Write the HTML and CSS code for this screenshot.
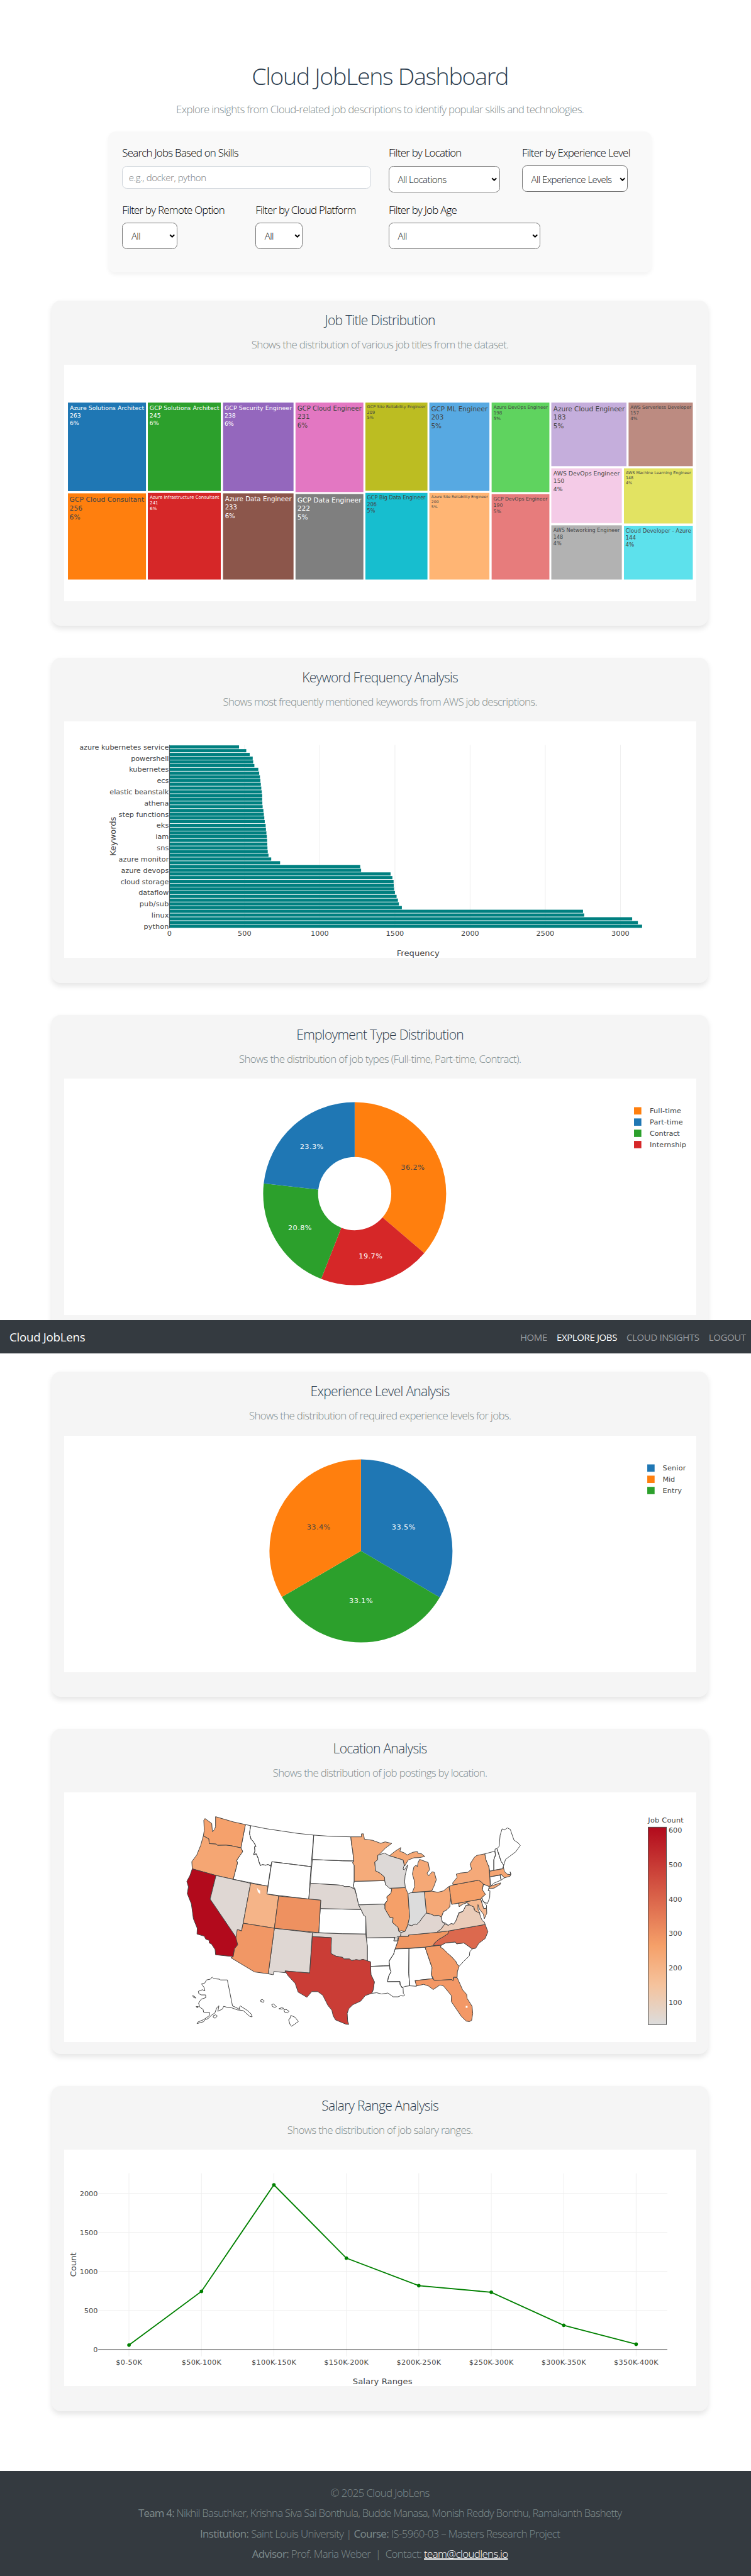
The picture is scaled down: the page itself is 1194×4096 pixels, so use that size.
FILE: index.html
```html
<!DOCTYPE html>
<html lang="en">
<head>
<meta charset="utf-8">
<title>Cloud JobLens Dashboard</title>
<link rel="stylesheet" href="styles.css">
</head>
<body>
<nav class="navbar">
  <a class="brand">Cloud JobLens</a>
  <div class="nav-links"><a>HOME</a><a class="active">EXPLORE JOBS</a><a>CLOUD INSIGHTS</a><a>LOGOUT</a></div>
</nav>
<main class="page">
  <h1>Cloud JobLens Dashboard</h1>
  <p class="lead">Explore insights from Cloud-related job descriptions to identify popular skills and technologies.</p>

  <section class="filters">
    <div class="field wide"><label>Search Jobs Based on Skills</label><div class="input">e.g., docker, python</div></div>
    <div class="field"><label>Filter by Location</label><div class="select w-location"><span>All Locations</span><svg class="chev" viewBox="0 0 12 8"><path d="M1.5 1.5 6 6 10.5 1.5"/></svg></div></div>
    <div class="field"><label>Filter by Experience Level</label><div class="select w-level"><span>All Experience Levels</span><svg class="chev" viewBox="0 0 12 8"><path d="M1.5 1.5 6 6 10.5 1.5"/></svg></div></div>
    <div class="field"><label>Filter by Remote Option</label><div class="select w-remote"><span>All</span><svg class="chev" viewBox="0 0 12 8"><path d="M1.5 1.5 6 6 10.5 1.5"/></svg></div></div>
    <div class="field"><label>Filter by Cloud Platform</label><div class="select w-cloud"><span>All</span><svg class="chev" viewBox="0 0 12 8"><path d="M1.5 1.5 6 6 10.5 1.5"/></svg></div></div>
    <div class="field wide"><label>Filter by Job Age</label><div class="select w-age"><span>All</span><svg class="chev" viewBox="0 0 12 8"><path d="M1.5 1.5 6 6 10.5 1.5"/></svg></div></div>
  </section>

  <section class="card">
    <h2>Job Title Distribution</h2>
    <p>Shows the distribution of various job titles from the dataset.</p>
    <svg class="plot" id="treemap" viewBox="135 771 1337 500"></svg>
  </section>

  <section class="card">
    <h2>Keyword Frequency Analysis</h2>
    <p>Shows most frequently mentioned keywords from AWS job descriptions.</p>
    <svg class="plot" id="keywords" viewBox="135 1526 1337 500">
      <text class="axis-title" x="883.4" y="2022" text-anchor="middle" textLength="90.6">Frequency</text>
      <text class="axis-title" transform="translate(244.5 1769) rotate(-90)" text-anchor="middle" textLength="82.6">Keywords</text>
    </svg>
  </section>

  <section class="card">
    <h2>Employment Type Distribution</h2>
    <p>Shows the distribution of job types (Full-time, Part-time, Contract).</p>
    <svg class="plot" viewBox="135 2281 1337 500">
      <g fill="none" stroke-width="116.1" transform="rotate(-90 749.3 2524.4)">
        <circle cx="749.3" cy="2524.4" r="135.45" pathLength="100" stroke="#ff7f0e" stroke-dasharray="36.2 63.8"/>
        <circle cx="749.3" cy="2524.4" r="135.45" pathLength="100" stroke="#d62728" stroke-dasharray="19.7 80.3" stroke-dashoffset="-36.2"/>
        <circle cx="749.3" cy="2524.4" r="135.45" pathLength="100" stroke="#2ca02c" stroke-dasharray="20.8 79.2" stroke-dashoffset="-55.9"/>
        <circle cx="749.3" cy="2524.4" r="135.45" pathLength="100" stroke="#1f77b4" stroke-dasharray="23.3 76.7" stroke-dashoffset="-76.7"/>
      </g>
      <g class="tick" text-anchor="middle">
        <text x="872" y="2474" textLength="50">36.2%</text>
        <text class="light" x="658.3" y="2430" textLength="50">23.3%</text>
        <text class="light" x="633.4" y="2601" textLength="50">20.8%</text>
        <text class="light" x="782.9" y="2662" textLength="50">19.7%</text>
      </g>
      <g class="tick">
        <rect x="1340" y="2341.5" width="15.5" height="15.5" fill="#ff7f0e"/><text x="1373.3" y="2354.3" textLength="66.5">Full-time</text>
        <rect x="1340" y="2365.3" width="15.5" height="15.5" fill="#1f77b4"/><text x="1373.3" y="2378" textLength="70">Part-time</text>
        <rect x="1340" y="2389" width="15.5" height="15.5" fill="#2ca02c"/><text x="1373.3" y="2401.8" textLength="63.5">Contract</text>
        <rect x="1340" y="2412.8" width="15.5" height="15.5" fill="#d62728"/><text x="1373.3" y="2425.5" textLength="77">Internship</text>
      </g>
    </svg>
  </section>

  <section class="card">
    <h2>Experience Level Analysis</h2>
    <p>Shows the distribution of required experience levels for jobs.</p>
    <svg class="plot" viewBox="135 3036 1337 500">
      <g fill="none" stroke-width="193.5" transform="rotate(-90 762.6 3279.5)">
        <circle cx="762.6" cy="3279.5" r="96.75" pathLength="100" stroke="#1f77b4" stroke-dasharray="33.5 66.5"/>
        <circle cx="762.6" cy="3279.5" r="96.75" pathLength="100" stroke="#2ca02c" stroke-dasharray="33.1 66.9" stroke-dashoffset="-33.5"/>
        <circle cx="762.6" cy="3279.5" r="96.75" pathLength="100" stroke="#ff7f0e" stroke-dasharray="33.4 66.6" stroke-dashoffset="-66.6"/>
      </g>
      <g class="tick" text-anchor="middle">
        <text class="light" x="852.7" y="3234.7" textLength="50">33.5%</text>
        <text x="673" y="3234.7" textLength="50">33.4%</text>
        <text class="light" x="762.6" y="3390.4" textLength="50">33.1%</text>
      </g>
      <g class="tick">
        <rect x="1368" y="3096.5" width="15.5" height="15.5" fill="#1f77b4"/><text x="1400.6" y="3109.3" textLength="49">Senior</text>
        <rect x="1368" y="3120.3" width="15.5" height="15.5" fill="#ff7f0e"/><text x="1400.6" y="3133" textLength="26">Mid</text>
        <rect x="1368" y="3144" width="15.5" height="15.5" fill="#2ca02c"/><text x="1400.6" y="3156.7" textLength="40.5">Entry</text>
      </g>
    </svg>
  </section>

  <section class="card">
    <h2>Location Analysis</h2>
    <p>Shows the distribution of job postings by location.</p>
    <svg class="plot tall" viewBox="135 3791 1337 528">
      <defs><linearGradient id="reds" x1="0" y1="1" x2="0" y2="0"><stop offset="0" stop-color="#dcdcdc"/><stop offset=".2" stop-color="#f5c39d"/><stop offset=".4" stop-color="#f5a069"/><stop offset="1" stop-color="#b20a1c"/></linearGradient></defs>
      <g class="states" transform="translate(370 3800) scale(.47831 .33333)">
        <path class="none" d="M310 177L333 184 328 235 335 270 345 285 357 315 350 318 352 345 346 368 358 363 366 390 368 405 376 437 385 431 400 435 410 430 420 440 424 430 409 568 256 524 275 420 271 405 285 375 298 348 290 325zM333 184L400 203 470 218 540 233 612 244 600 444 427 413 422 440 410 430 400 435 385 431 376 437 368 405 366 390 358 363 346 368 352 345 350 318 357 315 345 285 335 270 328 235zM427 413L600 444 590 650 405 618zM612 244L690 252 776 255 779 300 784 340 789 408 740 407 606 399zM606 399L740 407 789 408 784 420 791 435 791 535 787 570 792 586 770 570 750 571 735 562 597 550zM641 710L822 716 826 735 832 735 832 752 842 762 842 872 740 870 634 863zM791 537L926 533 930 560 945 575 957 583 955 610 935 635 939 650 937 660 927 675 926 690 919 682 810 687 800 620 795 586 787 570zM845 896L970 893 966 915 985 915 972 966 965 1000 948 1035 945 1050 948 1073 920 1073 863 1077 863 1048 849 1045 849 950zM863 1077L948 1073 949 1095 954 1110 943 1140 938 1174 993 1173 995 1195 1007 1215 1008 1248 1014 1260 1008 1265 996 1263 985 1270 963 1270 940 1246 912 1252 890 1244 868 1248 875 1225 880 1175 865 1130zM972 966L1033 964 1032 1120 1036 1200 1015 1204 1002 1213 993 1190 993 1173 938 1174 943 1140 954 1110 949 1095 945 1045 965 1000zM1033 964L1104 955 1135 1085 1132 1130 1138 1155 1060 1167 1066 1188 1066 1203 1036 1200 1032 1120zM1176 942L1195 928 1238 922 1244 934 1276 928 1313 966 1302 985 1300 1010 1275 1045 1255 1076 1245 1062 1240 1045 1222 1017 1205 995 1185 967 1172 955zM1215 640L1222 683 1253 676 1255 698 1270 683 1290 672 1298 685 1285 690 1272 728 1254 735 1240 790 1230 810 1220 805 1207 817 1192 800 1180 795 1176 765 1185 730 1200 718 1213 700zM1350 650L1356 645 1360 660 1376 690 1376 708 1363 710zM1362 555L1388 570 1383 597 1391 597 1390 640 1380 678 1360 665 1355 640 1371 620 1357 595zM1368 363L1413 346 1415 370 1408 400 1408 467 1390 473 1386 440 1381 430 1373 400zM1413 346L1414 332 1422 330 1440 410 1452 435 1447 457 1408 467 1408 400 1416 372zM1422 330L1432 315 1436 245 1445 204 1455 212 1468 198 1481 208 1497 275 1515 293 1525 310 1505 350 1460 398 1452 435 1440 410zM1390 509L1436 498 1440 530 1410 548 1395 565zM1436 498L1442 494 1455 515 1440 530z"/>
        <path fill="#f5a16c" d="M178 127L256 160 310 177 290 325 245 311 224 308 187 309 180 301 150 298 148 268 124 249 128 215 126 150 131 139 161 170 164 222 173 210 178 190z"/>
        <path fill="#f5a673" d="M124 249L148 268 150 298 180 301 187 309 224 308 245 311 290 325 298 348 285 375 271 405 275 420 256 524 180 500 75 458 73 412 95 370 112 310z"/>
        <path fill="#b20a1c" d="M75 458L180 500 154 650 270 895 276 940 262 965 256 1015 178 1003 176 970 160 935 150 928 150 912 135 905 128 885 96 872 97 835 80 775 71 680 53 615 58 572 51 538 65 500z"/>
        <path fill="#dfd7d3" d="M180 500L333 550 300 803 293 852 276 843 270 895 154 650zM438 835L606 863 594 1119 485 1106 487 1117 436 1109 433 1130 411 1124zM597 550L735 562 750 571 770 570 792 586 800 620 810 685 822 716 641 710 643 657 590 650zM606 863L740 870 842 872 849 950 849 1045 830 1032 815 1038 800 1034 780 1040 770 1030 745 1030 740 1020 710 1012 688 995 690 895 606 888z"/>
        <path fill="#f5b488" d="M333 550L409 568 405 618 457 631 438 835 300 803z"/>
        <path fill="#ee9160" d="M457 631L643 657 634 863 438 835z"/>
        <path fill="#f19765" d="M300 803L438 835 411 1124 350 1112 246 1022 256 1015 262 965 276 940 268 895 274 843 293 852z"/>
        <path fill="#ca3d36" d="M606 888L690 895 688 995 710 1012 740 1020 745 1030 770 1030 780 1040 800 1034 815 1038 830 1032 863 1048 865 1130 880 1175 875 1225 868 1248 840 1262 820 1297 785 1320 767 1345 760 1375 762 1425 767 1445 755 1444 708 1416 698 1390 692 1355 675 1325 652 1260 630 1237 603 1237 582 1273 543 1240 530 1185 498 1135 485 1106 594 1119z"/>
        <path fill="#f5ab7a" d="M776 255L823 255 823 236 832 236 836 270 872 277 908 296 928 287 957 297 930 325 902 366 895 372 895 400 882 415 885 470 905 485 925 510 926 533 791 537 791 435 784 420 789 408 784 340 779 300z"/>
        <path fill="#ded9d5" d="M810 687L919 682 927 690 927 712 950 768 963 768 960 798 985 830 988 855 998 862 996 885 980 890 983 915 966 915 972 893 845 896 842 762 832 752 826 730z"/>
        <path fill="#f39b67" d="M1104 955L1176 942 1172 955 1185 967 1205 995 1222 1017 1240 1045 1245 1062 1255 1076 1247 1110 1246 1146 1230 1146 1228 1168 1222 1161 1145 1166 1132 1130 1135 1085z"/>
        <path fill="#f39866" d="M1060 1167L1138 1155 1145 1166 1222 1161 1228 1168 1232 1146 1246 1148 1270 1225 1288 1255 1290 1280 1312 1330 1315 1375 1310 1420 1300 1427 1286 1424 1265 1395 1220 1300 1221 1263 1185 1200 1170 1195 1140 1224 1120 1202 1098 1191 1066 1201z"/>
        <path fill="#dc694e" d="M1208 852L1370 811 1382 857 1370 900 1342 930 1328 962 1313 966 1276 928 1244 934 1238 922 1195 928 1176 942 1141 945 1145 930 1165 905 1180 893 1205 870z"/>
        <path fill="#f09662" d="M988 887L1031 886 1031 878 1156 861 1208 852 1205 870 1180 893 1165 905 1145 930 1141 945 1104 955 972 966 985 915z"/>
        <path fill="#e0d5d0" d="M996 885L998 862 1015 855 1026 822 1028 812 1045 818 1060 808 1068 810 1080 793 1095 763 1110 738 1130 745 1145 755 1165 753 1176 765 1180 795 1192 808 1175 840 1156 861 1031 878 1031 886z"/>
        <path fill="#eaccb9" d="M1156 861L1175 840 1192 808 1207 817 1220 805 1230 810 1240 790 1254 740 1272 728 1285 690 1302 688 1320 700 1320 715 1345 740 1350 765 1358 788 1366 795 1370 811 1208 852z"/>
        <path fill="#f5b890" d="M1253 676L1350 650 1363 710 1376 708 1377 740 1366 775 1362 745 1345 715 1338 685 1338 715 1347 740 1325 725 1320 700 1302 688 1290 672 1270 683 1255 698z"/>
        <path fill="#f5a069" d="M1210 570L1228 560 1340 530 1352 540 1362 555 1357 590 1371 620 1355 640 1350 650 1222 683zM947 581L1017 577 1029 617 1036 765 1028 812 1023 830 1015 855 998 850 990 857 985 830 960 798 963 768 950 768 927 712 927 680 937 660 935 635 953 615 957 585z"/>
        <path fill="#f5a979" d="M1228 560L1226 548 1246 512 1242 492 1258 485 1293 480 1310 460 1303 428 1322 385 1333 373 1368 363 1373 400 1386 445 1390 500 1392 560 1390 570 1438 547 1437 556 1410 580 1388 585 1388 570 1362 555 1352 540 1340 530z"/>
        <path fill="#f5a572" d="M1390 473L1447 458 1450 445 1455 475 1468 492 1483 495 1480 477 1484 490 1480 505 1455 515 1442 494 1390 509z"/>
        <path fill="#f5a876" d="M1101 604L1133 599 1160 607 1185 598 1210 570 1218 640 1213 700 1200 718 1185 730 1176 765 1165 753 1145 755 1130 745 1110 738zM947 375L970 348 997 323 993 347 1010 355 1025 370 1050 353 1070 348 1073 360 1088 362 1103 380 1078 387 1055 388 1030 402 1014 440 1007 402 985 392zM1080 398L1118 418 1124 465 1113 485 1120 503 1135 477 1145 480 1154 527 1143 570 1133 599 1048 607 1058 570 1056 530 1048 490 1055 445 1065 435 1070 445 1073 420z"/>
        <path fill="#dcdcdc" d="M1029 617L1040 610 1101 604 1110 738 1095 763 1080 793 1068 810 1060 808 1045 818 1028 812 1036 765z"/>
        <path fill="#ddd9d7" d="M895 372L925 358 947 375 985 392 1007 402 1012 435 1007 460 1012 465 1028 432 1016 500 1014 540 1017 577 947 581 930 560 926 533 925 510 905 485 885 470 882 415 895 400z"/>
        <path class="none" d="M163 1145L170 1155 195 1158 200 1163 230 1163 253 1328 265 1335 285 1350 282 1338 288 1328 320 1358 335 1378 340 1397 330 1395 315 1377 300 1357 275 1353 250 1340 232 1338 214 1330 208 1348 188 1362 193 1327 183 1340 175 1372 160 1387 145 1408 132 1415 125 1428 96 1440 100 1430 125 1415 150 1390 152 1370 125 1367 123 1350 108 1335 103 1310 115 1285 135 1275 134 1258 115 1258 104 1250 102 1235 120 1225 131 1232 127 1210 116 1188 130 1183 138 1163 155 1158zM76 1262L86 1268 91 1278 82 1275zM92 1332L102 1332 98 1341zM168 1390L178 1384 186 1392 176 1406 168 1400zM378 1290L385 1287 393 1296 390 1305 378 1300zM426 1320L434 1315 447 1332 441 1337 431 1333zM458 1346L470 1339 479 1343 472 1348zM480 1352L490 1350 503 1362 495 1372 484 1368zM511 1388L530 1400 544 1427 514 1457 507 1445 501 1415 506 1410z"/>
        <path class="lake" d="M361 577L368 590 375 595 375 617 365 605zM1284 1328h8v12h-8z"/>
      </g>
      <rect x="1370" y="3864.6" width="38.5" height="417.4" fill="url(#reds)" stroke="#444" stroke-width="1.25"/>
      <g class="tick">
        <text x="1369.7" y="3855" textLength="75">Job Count</text>
        <text x="1413" y="3876">600</text><text x="1413" y="3949">500</text><text x="1413" y="4022">400</text>
        <text x="1413" y="4094">300</text><text x="1413" y="4167">200</text><text x="1413" y="4240">100</text>
      </g>
    </svg>
  </section>

  <section class="card">
    <h2>Salary Range Analysis</h2>
    <p>Shows the distribution of job salary ranges.</p>
    <svg class="plot" viewBox="135 4546 1337 500">
      <path class="grid" d="M272.1 4596V4983M425.3 4596V4983M578.5 4596V4983M731.7 4596V4983M884.9 4596V4983M1038.1 4596V4983M1191.3 4596V4983M1344.5 4596V4983M207 4638.6H1410.5M207 4721.1H1410.5M207 4803.6H1410.5M207 4886.2H1410.5"/>
      <path d="M207 4968.7H1410.5" stroke="#444" stroke-width="1.25"/>
      <polyline points="272.1,4959.4 425.3,4845.8 578.5,4620.5 731.7,4775.5 884.9,4833.7 1038.1,4847.7 1191.3,4917.5 1344.5,4957.5" fill="none" stroke="#008000" stroke-width="2.5"/>
      <g fill="#008000"><circle cx="272.1" cy="4959.4" r="3.75"/><circle cx="425.3" cy="4845.8" r="3.75"/><circle cx="578.5" cy="4620.5" r="3.75"/><circle cx="731.7" cy="4775.5" r="3.75"/><circle cx="884.9" cy="4833.7" r="3.75"/><circle cx="1038.1" cy="4847.7" r="3.75"/><circle cx="1191.3" cy="4917.5" r="3.75"/><circle cx="1344.5" cy="4957.5" r="3.75"/></g>
      <g class="tick" text-anchor="end"><text x="206" y="4644">2000</text><text x="206" y="4726.5">1500</text><text x="206" y="4809">1000</text><text x="206" y="4891.5">500</text><text x="206" y="4974">0</text></g>
      <g class="tick" text-anchor="middle"><text x="272.1" y="5000.4" textLength="55.5">$0-50K</text><text x="425.3" y="5000.4" textLength="84">$50K-100K</text><text x="578.5" y="5000.4" textLength="94">$100K-150K</text><text x="731.7" y="5000.4" textLength="94">$150K-200K</text><text x="884.9" y="5000.4" textLength="94">$200K-250K</text><text x="1038.1" y="5000.4" textLength="94">$250K-300K</text><text x="1191.3" y="5000.4" textLength="94">$300K-350K</text><text x="1344.5" y="5000.4" textLength="94">$350K-400K</text></g>
      <text class="axis-title" x="808.2" y="5042" text-anchor="middle" textLength="126">Salary Ranges</text>
      <text class="axis-title" transform="translate(159.8 4789) rotate(-90)" text-anchor="middle" textLength="51.7">Count</text>
    </svg>
  </section>
</main>
<footer class="footer">
  <p>© 2025 Cloud JobLens</p>
  <p class="team"><b>Team 4:</b> Nikhil Basuthker, Krishna Siva Sai Bonthula, Budde Manasa, Monish Reddy Bonthu, Ramakanth Bashetty</p>
  <p><b>Institution:</b> Saint Louis University | <b>Course:</b> IS-5960-03 – Masters Research Project</p>
  <p><b>Advisor:</b> Prof. Maria Weber &nbsp;|&nbsp; Contact: <a>team@cloudlens.io</a></p>
</footer>
<script src="charts.js"></script>
</body>
</html>
```
FILE: styles.css
```css
/* 1rem is ten layout units */
html { font-size: 7.519px; }
* { box-sizing: border-box; }
body { margin: 0; position: relative; height: 544.8rem; overflow: hidden; background: #fff; font-family: "Open Sans", "Noto Sans", sans-serif; font-size: 2.25rem; font-weight: 300; color: #000; }
h1, h2, p { margin: 0; font-weight: 300; }

.navbar { position: absolute; z-index: 2; top: 279.2rem; left: 0; right: 0; height: 7rem; padding: 0 1.1rem 0 2rem; background: #343a40; display: flex; align-items: center; justify-content: space-between; font-weight: 400; }
.brand { font-size: 2.5rem; color: #fff; letter-spacing: -.017em; white-space: nowrap; }
.nav-links { display: flex; gap: 2rem; font-size: 2rem; letter-spacing: -.026em; color: #999c9f; white-space: nowrap; }
.nav-links .active { color: #fff; }

.page { padding: 13.05rem 0 0 1.9rem; display: flex; flex-direction: column; align-items: center; }
h1 { font-size: 5rem; line-height: 6rem; color: #2c3e50; letter-spacing: -.0355em; white-space: nowrap; }
.lead { margin-top: 2.6rem; line-height: 3rem; color: #7f8c8d; letter-spacing: -.041em; white-space: nowrap; }

.filters { margin-top: 3.12rem; width: 115rem; height: 29.83rem; padding: 3.12rem 3rem 0; background: #f9f9f9; border-radius: 1.6rem; box-shadow: 0 .5rem .8rem rgba(0,0,0,.05); display: grid; grid-template-columns: repeat(4, 24.4rem); column-gap: 3.78rem; row-gap: 2.25rem; align-content: start; }
.field { display: flex; flex-direction: column; align-items: flex-start; }
.wide { grid-column: span 2; }
label { line-height: 3rem; margin-bottom: 1.2rem; letter-spacing: -.045em; white-space: nowrap; }
.field:nth-child(n+3) label { margin-bottom: 1.15rem; }
.input, .select { background: #fff; display: flex; align-items: center; border-radius: 1rem; font-size: 2rem; letter-spacing: -.037em; white-space: nowrap; }
.input { width: 100%; height: 4.8rem; padding: 0 1.25rem; border: 1px solid #ced4da; color: #7b8084; letter-spacing: -.027em; }
.select { height: 5.57rem; padding: .15rem .45rem 0 1.8rem; border: 1px solid #767676; justify-content: space-between; color: #111; }
.chev { width: 1.25rem; height: .85rem; fill: none; stroke: #000; stroke-width: 2.4; }
.w-location { width: 23.5rem; }
.w-level { width: 22.4rem; }
.w-remote { width: 11.7rem; }
.w-cloud { width: 10rem; }
.w-age { width: 32.1rem; }

.card { width: 138.8rem; height: 68.8rem; padding-top: 2.55rem; margin-top: 6.7rem; background: #f5f5f5; border-radius: 1.9rem; box-shadow: 0 .6rem 1.2rem rgba(0,0,0,.1); display: flex; flex-direction: column; align-items: center; white-space: nowrap; }
.filters + .card { margin-top: 6rem; }
.card h2 { font-size: 2.8rem; line-height: 3.4rem; color: #2c3e50; letter-spacing: -.034em; }
.card p { margin: 1.9rem 0 2.65rem; line-height: 3rem; color: #7f8c8d; letter-spacing: -.042em; }
.plot { display: block; width: 133.7rem; height: 50rem; background: #fff; font-family: "DejaVu Sans", sans-serif; font-weight: 400; }
.plot.tall { height: 52.8rem; }
.tick { font-size: 15px; fill: #444; }
.tick .light { fill: #fff; }
.axis-title { font-size: 17.5px; fill: #444; }
.grid { fill: none; stroke: #eee; stroke-width: 1.25; }
.states path { stroke: #444; stroke-width: 1; vector-effect: non-scaling-stroke; stroke-linejoin: round; }
.states .none { fill: #fff; }
.states .lake { fill: #fff; stroke: none; }

.footer { position: absolute; top: 522.6rem; left: 0; right: 0; height: 22.2rem; padding: 2.46rem 0 0 1.9rem; background: #343a40; color: #7f8c8d; text-align: center; white-space: nowrap; }
.footer p { line-height: 4.32rem; letter-spacing: -.038em; }
.footer .team { letter-spacing: -.046em; }
.footer b { font-weight: 400; }
.footer a { color: #fff; text-decoration: underline; text-decoration-thickness: 1.5px; text-underline-offset: 1px; }
```
FILE: charts.js
```js
const NS = 'http://www.w3.org/2000/svg';
function add(parent, tag, attrs, text) {
  const el = document.createElementNS(NS, tag);
  for (const k in attrs) el.setAttribute(k, attrs[k]);
  if (text !== undefined) el.textContent = text;
  parent.appendChild(el);
  return el;
}

// x, y, right, bottom, fill, title, count, share, text x, first baseline, line pitch, title width, text colour
const tiles = [
  [143, 851, 308, 1038.3, '#1f77b4', 'Azure Solutions Architect', 263, '6%', 146.9, 867, 16.1, 157.3, '#fff'],
  [143, 1042.9, 308, 1225.2, '#ff7f0e', 'GCP Cloud Consultant', 256, '6%', 146.4, 1060.8, 18.6, 157.8, '#444'],
  [311.9, 851, 466.2, 1037.9, '#2ca02c', 'GCP Solutions Architect', 245, '6%', 315.7, 867, 16.1, 147.3, '#fff'],
  [311.9, 1042, 466.2, 1225.2, '#d62728', 'Azure Infrastructure Consultant', 241, '6%', 316.2, 1054.8, 12, 146.8, '#fff'],
  [470.9, 851, 620, 1038.3, '#9467bd', 'GCP Security Engineer', 238, '6%', 474, 867, 16.3, 142.6, '#fff'],
  [470.9, 1042.9, 620, 1225.2, '#8c564b', 'Azure Data Engineer', 233, '6%', 475, 1059.9, 17.6, 141, '#fff'],
  [624.2, 851, 767.7, 1040.2, '#e377c2', 'GCP Cloud Engineer', 231, '6%', 628, 867.6, 18.1, 135.9, '#444'],
  [624.2, 1044.3, 767.7, 1225.2, '#7f7f7f', 'GCP Data Engineer', 222, '5%', 628, 1061.7, 18.5, 135.5, '#fff'],
  [772, 851, 903.2, 1037.4, '#bcbd22', 'GCP Site Reliability Engineer', 209, '5%', 775.5, 862.9, 11.4, 123.8, '#444'],
  [772, 1042, 903.2, 1225.2, '#17becf', 'GCP Big Data Engineer', 206, '5%', 775.5, 1055.8, 14, 123.5, '#444'],
  [907.2, 851, 1034.2, 1037.9, '#57a9e2', 'GCP ML Engineer', 203, '5%', 911, 868.9, 18.1, 119.4, '#444'],
  [907.2, 1042, 1034.2, 1225.2, '#ffb574', 'Azure Site Reliability Engineer', 200, '5%', 911.5, 1053, 10.6, 119.4, '#444'],
  [1038.9, 851, 1161, 1040.2, '#5fd35f', 'Azure DevOps Engineer', 198, '5%', 1043, 863.8, 12.4, 114.6, '#444'],
  [1038.9, 1044.6, 1161, 1225.2, '#e77c7c', 'GCP DevOps Engineer', 190, '5%', 1042.7, 1058, 13.5, 114.3, '#444'],
  [1165.1, 851, 1324, 985.5, '#c5aedc', 'Azure Cloud Engineer', 183, '5%', 1169.4, 868.9, 18.1, 151.2, '#444'],
  [1328.5, 851, 1464.3, 985.5, '#bc8b81', 'AWS Serverless Developer', 157, '4%', 1332.4, 863.8, 12.4, 128.6, '#444'],
  [1165.1, 990, 1314.2, 1105.8, '#f4cbe7', 'AWS DevOps Engineer', 150, '4%', 1169.4, 1005.7, 16, 140.4, '#444'],
  [1318.7, 990, 1464.3, 1106.7, '#e2e362', 'AWS Machine Learning Engineer', 148, '4%', 1322.6, 1002, 11, 138, '#444'],
  [1165.1, 1110.6, 1314.2, 1225.2, '#b2b2b2', 'AWS Networking Engineer', 148, '4%', 1169.4, 1125, 14, 140.4, '#444'],
  [1318.7, 1111.5, 1464.3, 1225.2, '#5de1ec', 'Cloud Developer - Azure', 144, '4%', 1322, 1126, 15, 138.6, '#444']
];
const tree = document.getElementById('treemap');
for (const [x, y, r, b, fill, title, n, pct, tx, ty, lh, w, ink] of tiles) {
  add(tree, 'rect', { x, y, width: r - x, height: b - y, fill });
  const base = { x: tx, fill: ink, 'font-size': lh / 1.3 };
  add(tree, 'text', { ...base, y: ty, textLength: w, lengthAdjust: 'spacingAndGlyphs' }, title);
  add(tree, 'text', { ...base, y: ty + lh }, n);
  add(tree, 'text', { ...base, y: ty + 2 * lh }, pct);
}

const counts = [463, 511, 534, 554, 557, 565, 591, 597, 602, 605, 608, 611, 614, 617, 617, 618, 620, 625, 628, 631, 634, 640, 642, 645, 648, 650, 651, 652, 654, 659, 677, 736, 1269, 1275, 1471, 1483, 1491, 1492, 1494, 1500, 1511, 1520, 1526, 1546, 2751, 2759, 3078, 3116, 3144];
// shown for every third bar, with its width
const names = [['azure kubernetes service', 189], ['powershell', 80], ['kubernetes', 84], ['ecs', 25], ['elastic beanstalk', 125], ['athena', 52], ['step functions', 106], ['eks', 26], ['iam', 28], ['sns', 25.5], ['azure monitor', 106], ['azure devops', 101], ['cloud storage', 102], ['dataflow', 64], ['pub/sub', 62], ['linux', 36.5], ['python', 53]];
const bars = document.getElementById('keywords');
const x0 = 357.6, unit = 0.35102 / 1.1042, pitch = 7.9, top0 = 1576.2;
for (let v = 0; v <= 3000; v += 500) {
  const x = x0 + v * unit;
  if (v) add(bars, 'path', { class: 'grid', d: `M${x} 1576V1963.3` });
  add(bars, 'text', { class: 'tick', x, y: 1980, 'text-anchor': 'middle' }, v);
}
counts.forEach((v, i) => {
  add(bars, 'rect', { x: x0, y: top0 + pitch * i + 0.6, width: v * unit, height: 6.7, fill: '#008080' });
});
add(bars, 'path', { d: `M${x0} 1576V1963.3`, stroke: '#444', 'stroke-width': 1.25 });
names.forEach(([name, w], i) => {
  add(bars, 'text', { class: 'tick', x: 356.2, y: top0 + pitch * (3 * i + 0.5) + 5.3, 'text-anchor': 'end', textLength: w }, name);
});
```
